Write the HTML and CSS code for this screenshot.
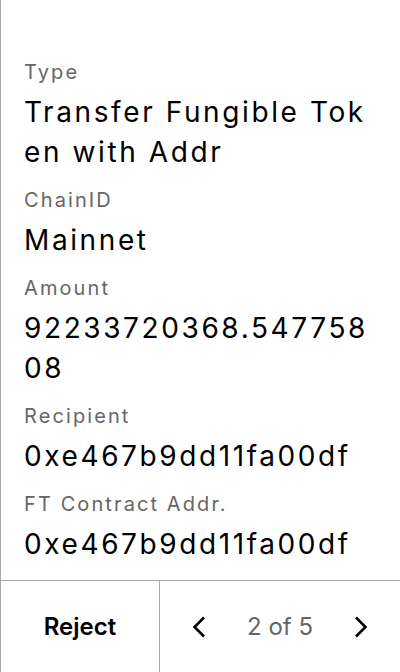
FILE: index.html
```html
<!DOCTYPE html>
<html lang="en">
<head>
<meta charset="utf-8">
<title>Review transaction</title>
<link rel="stylesheet" href="styles.css">
</head>
<body>
<div class="screen">
  <main class="fields">
    <div class="field">
      <div class="label">Type</div>
      <div class="value">Transfer Fungible Token with Addr</div>
    </div>
    <div class="field">
      <div class="label">ChainID</div>
      <div class="value">Mainnet</div>
    </div>
    <div class="field">
      <div class="label">Amount</div>
      <div class="value">92233720368.54775808</div>
    </div>
    <div class="field">
      <div class="label">Recipient</div>
      <div class="value">0xe467b9dd11fa00df</div>
    </div>
    <div class="field">
      <div class="label">FT Contract Addr.</div>
      <div class="value">0xe467b9dd11fa00df</div>
    </div>
  </main>
  <footer class="footer">
    <button class="reject">Reject</button>
    <div class="pager">
      <button class="nav" aria-label="Previous">
        <svg width="14" height="22" viewBox="0 0 14 22"><path d="M12 1.5 L2.5 11 L12 20.5" fill="none" stroke="#000" stroke-width="2.6" stroke-linecap="butt" stroke-linejoin="miter"/></svg>
      </button>
      <span class="count">2 of 5</span>
      <button class="nav" aria-label="Next">
        <svg width="14" height="22" viewBox="0 0 14 22"><path d="M2 1.5 L11.5 11 L2 20.5" fill="none" stroke="#000" stroke-width="2.6" stroke-linecap="butt" stroke-linejoin="miter"/></svg>
      </button>
    </div>
  </footer>
</div>
</body>
</html>
```

FILE: styles.css
```css
* { box-sizing: border-box; }
html, body { margin: 0; padding: 0; background: #fff; }
body { font-family: Inter, "Noto Sans", sans-serif; color: #000; }

.screen {
  width: 400px;
  height: 672px;
  display: flex;
  flex-direction: column;
  border-left: 1px solid #a8a8a8;
}

.fields {
  flex: 1;
  padding: 58px 22px 0 23px;
  display: flex;
  flex-direction: column;
  gap: 14px;
}

.field { display: flex; flex-direction: column; gap: 6px; }

.label {
  font-size: 20px;
  line-height: 28px;
  letter-spacing: 2.1px;
  color: #666;
}

.value {
  font-size: 28px;
  line-height: 40px;
  letter-spacing: 2.6px;
  color: #000;
  word-break: break-all;
}

.footer {
  height: 92px;
  border-top: 1px solid #a8a8a8;
  display: flex;
}

button {
  font-family: inherit;
  background: none;
  border: 0;
  padding: 0;
  margin: 0;
  cursor: pointer;
  color: inherit;
}

.reject {
  width: 159px;
  font-size: 24px;
  font-weight: 600;
  color: #000;
  border-right: 1px solid #a8a8a8;
}

.pager {
  flex: 1;
  display: flex;
  align-items: center;
}

.nav {
  width: 78px;
  height: 100%;
  display: flex;
  align-items: center;
  justify-content: center;
}

.count {
  flex: 1;
  text-align: center;
  font-size: 24px;
  color: #666;
}
```
